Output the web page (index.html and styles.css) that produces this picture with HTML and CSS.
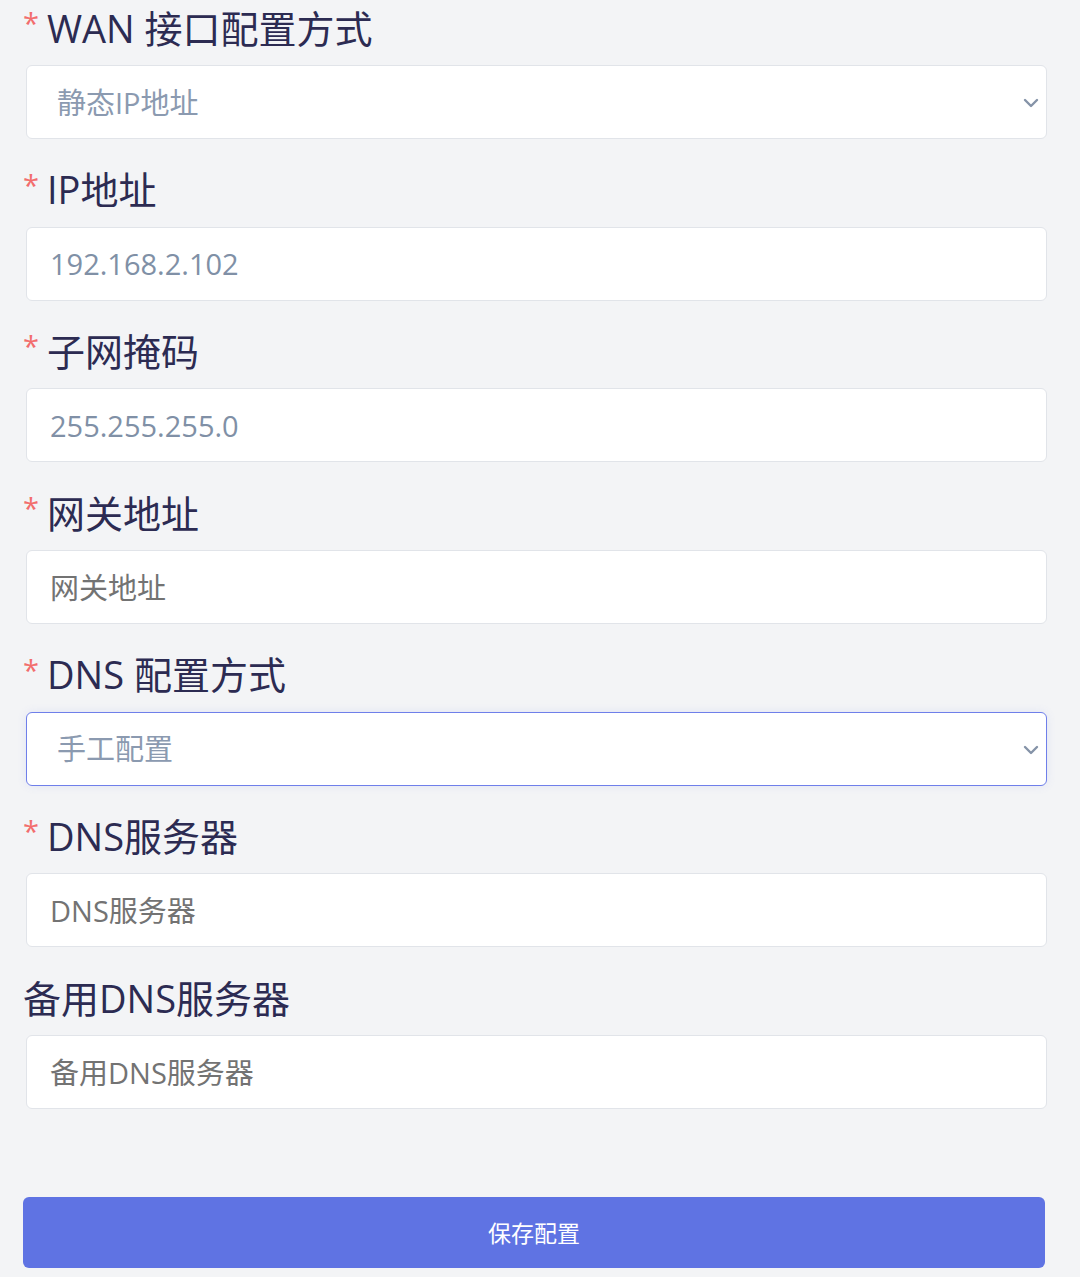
FILE: index.html
```html
<!DOCTYPE html>
<html lang="zh-CN">
<head>
<meta charset="utf-8">
<title>WAN 配置</title>
<link rel="stylesheet" href="styles.css">
</head>
<body>
<form class="form">
  <div class="field">
    <label class="label"><span class="req">*</span>WAN 接口配置方式</label>
    <div class="select-wrap">
      <select class="control select"><option>静态IP地址</option></select>
      <svg class="chev" viewBox="0 0 16 10" width="16" height="10"><path d="M2 2 L8 8 L14 2" fill="none" stroke="#8593a8" stroke-width="2.4" stroke-linecap="round" stroke-linejoin="round"/></svg>
    </div>
  </div>
  <div class="field">
    <label class="label"><span class="req">*</span>IP地址</label>
    <input class="control value" type="text" value="192.168.2.102">
  </div>
  <div class="field">
    <label class="label"><span class="req">*</span>子网掩码</label>
    <input class="control value" type="text" value="255.255.255.0">
  </div>
  <div class="field">
    <label class="label"><span class="req">*</span>网关地址</label>
    <input class="control" type="text" placeholder="网关地址">
  </div>
  <div class="field">
    <label class="label"><span class="req">*</span>DNS 配置方式</label>
    <div class="select-wrap">
      <select class="control select focused"><option>手工配置</option></select>
      <svg class="chev" viewBox="0 0 16 10" width="16" height="10"><path d="M2 2 L8 8 L14 2" fill="none" stroke="#8593a8" stroke-width="2.4" stroke-linecap="round" stroke-linejoin="round"/></svg>
    </div>
  </div>
  <div class="field">
    <label class="label"><span class="req">*</span>DNS服务器</label>
    <input class="control" type="text" placeholder="DNS服务器">
  </div>
  <div class="field">
    <label class="label">备用DNS服务器</label>
    <input class="control" type="text" placeholder="备用DNS服务器">
  </div>
  <button type="button" class="save">保存配置</button>
</form>
</body>
</html>
```

FILE: styles.css
```css
* { box-sizing: border-box; }
html, body {
  margin: 0;
  background: #f3f4f6;
}
body {
  font-family: "Open Sans", "Noto Sans CJK SC", sans-serif;
}
.form {
  width: 1021px;
  margin-left: 26px;
  padding-top: 3px;
  display: flex;
  flex-direction: column;
}
.field {
  display: flex;
  flex-direction: column;
  margin-bottom: 25.7px;
}
.label {
  display: flex;
  align-items: center;
  height: 46px;
  margin-bottom: 16px;
  margin-left: -3px;
  font-size: 38px;
  color: #2c2b52;
  white-space: nowrap;
}
.req {
  color: #f26d6d;
  font-size: 29px;
  margin-right: 8px;
  align-self: flex-start;
  margin-top: 0;
}
.control {
  display: block;
  width: 100%;
  height: 74px;
  border: 1px solid #e1e4e9;
  border-radius: 6px;
  background: #ffffff;
  padding: 0 23px;
  font-family: "Open Sans", "Noto Sans CJK SC", sans-serif;
  font-size: 29px;
  color: #7f8fa6;
  outline: none;
}
.control::placeholder {
  color: #737373;
  opacity: 1;
}
.value { color: #8090a6; }
.select-wrap { position: relative; }
.select {
  appearance: none;
  -webkit-appearance: none;
  padding-left: 30px;
  color: #8b9ab0;
}
.focused {
  border-color: #6f7fea;
  box-shadow: 0 0 10px rgba(111, 127, 234, 0.12);
}
.chev {
  position: absolute;
  right: 8px;
  top: 50%;
  margin-top: -4px;
  pointer-events: none;
}
.save {
  margin-top: 62px;
  margin-left: -3px;
  width: 1022px;
  height: 71px;
  border: none;
  border-radius: 6px;
  background: #5f73e3;
  color: #ffffff;
  font-family: "Noto Sans CJK SC", "Open Sans", sans-serif;
  font-size: 23px;
}
```
